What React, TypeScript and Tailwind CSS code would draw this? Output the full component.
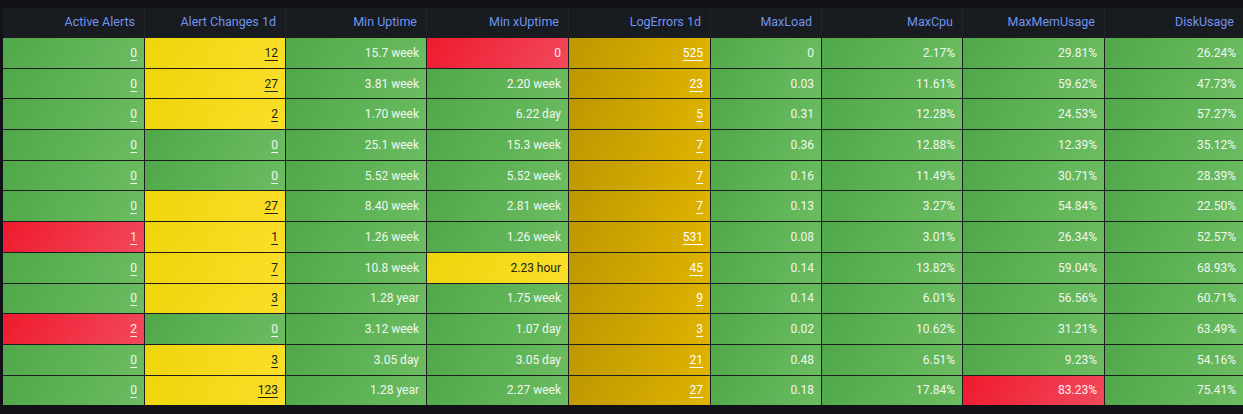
import React from 'react';

type Tone = 'green' | 'yellow' | 'red' | 'gold';

const toneClass: Record<Tone, string> = {
  green: 'bg-[linear-gradient(120deg,#4fa849,#6cbc62)] text-white/90',
  yellow: 'bg-[linear-gradient(120deg,#eed50a,#fade2a)] text-[#23230f]',
  red: 'bg-[linear-gradient(120deg,#ef1a2e,#f2495c)] text-white/90',
  gold: 'bg-[linear-gradient(120deg,#bd9700,#e0b400)] text-white',
};

const headers = [
  'Active Alerts',
  'Alert Changes 1d',
  'Min Uptime',
  'Min xUptime',
  'LogErrors 1d',
  'MaxLoad',
  'MaxCpu',
  'MaxMemUsage',
  'DiskUsage',
];

const rows: string[][] = [
  ['0', '12', '15.7 week', '0', '525', '0', '2.17%', '29.81%', '26.24%'],
  ['0', '27', '3.81 week', '2.20 week', '23', '0.03', '11.61%', '59.62%', '47.73%'],
  ['0', '2', '1.70 week', '6.22 day', '5', '0.31', '12.28%', '24.53%', '57.27%'],
  ['0', '0', '25.1 week', '15.3 week', '7', '0.36', '12.88%', '12.39%', '35.12%'],
  ['0', '0', '5.52 week', '5.52 week', '7', '0.16', '11.49%', '30.71%', '28.39%'],
  ['0', '27', '8.40 week', '2.81 week', '7', '0.13', '3.27%', '54.84%', '22.50%'],
  ['1', '1', '1.26 week', '1.26 week', '531', '0.08', '3.01%', '26.34%', '52.57%'],
  ['0', '7', '10.8 week', '2.23 hour', '45', '0.14', '13.82%', '59.04%', '68.93%'],
  ['0', '3', '1.28 year', '1.75 week', '9', '0.14', '6.01%', '56.56%', '60.71%'],
  ['2', '0', '3.12 week', '1.07 day', '3', '0.02', '10.62%', '31.21%', '63.49%'],
  ['0', '3', '3.05 day', '3.05 day', '21', '0.48', '6.51%', '9.23%', '54.16%'],
  ['0', '123', '1.28 year', '2.27 week', '27', '0.18', '17.84%', '83.23%', '75.41%'],
];

const links = [0, 1, 4];

// thresholds, roughly what the dashboard applies
const toneFor = (col: number, v: string): Tone => {
  if (col === 0) return v === '0' ? 'green' : 'red';
  if (col === 1) return v === '0' ? 'green' : 'yellow';
  if (col === 3) {
    if (v === '0') return 'red';
    if (v.includes('hour')) return 'yellow';
    return 'green';
  }
  if (col === 4) return 'gold';
  if (col === 7) return parseFloat(v) > 80 ? 'red' : 'green';
  return 'green';
};

const cols = 'grid grid-cols-[141px_140px_140px_141px_141px_110px_140px_141px_138px] gap-x-px';

const App: React.FC = () => {
  return (
    <div className="w-[1243px] h-[414px] bg-[#111217] pt-[8px] pl-[3px] overflow-hidden font-['Roboto',sans-serif]">
      <div className={`${cols} h-[29px] bg-[#181b1f]`}>
        {headers.map((h, i) => (
          <div
            key={h}
            className={`flex items-center justify-end pr-[9px] text-[12.5px] text-[#7093ec] ${i < 8 ? 'border-r border-[#202328] -mr-px' : ''}`}
          >
            {h}
          </div>
        ))}
      </div>
      <div className={`${cols} gap-y-px bg-[#1b1d1f] pt-px`}>
        {rows.map((r, ri) =>
          r.map((v, ci) => (
            <div
              key={`${ri}-${ci}`}
              className={`h-[29.7px] flex items-center justify-end pr-[7px] text-[12px] ${toneClass[toneFor(ci, v)]}`}
            >
              {links.includes(ci) ? <span className="underline underline-offset-[3px]">{v}</span> : v}
            </div>
          ))
        )}
      </div>
    </div>
  );
};

export default App;
